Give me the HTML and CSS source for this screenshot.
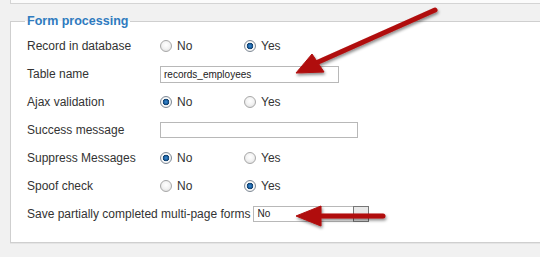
FILE: index.html
```html
<!DOCTYPE html>
<html lang="en">
<head>
    <meta charset="UTF-8">
    <title>Form processing</title>
    <link rel="stylesheet" href="styles.css">
</head>
<body>

<div class="prev-panel"></div>

<fieldset class="panel">
    <legend>Form processing</legend>

    <div class="row">
        <label class="lbl">Record in database</label>
        <div class="choices">
            <span class="choice"><span class="radio"></span>No</span>
            <span class="choice"><span class="radio checked"></span>Yes</span>
        </div>
    </div>

    <div class="row">
        <label class="lbl" for="table">Table name</label>
        <div><input type="text" id="table" class="field" value="records_employees"></div>
    </div>

    <div class="row">
        <label class="lbl">Ajax validation</label>
        <div class="choices">
            <span class="choice"><span class="radio checked"></span>No</span>
            <span class="choice"><span class="radio"></span>Yes</span>
        </div>
    </div>

    <div class="row">
        <label class="lbl" for="success">Success message</label>
        <div><input type="text" id="success" class="field field-long" value=""></div>
    </div>

    <div class="row">
        <label class="lbl">Suppress Messages</label>
        <div class="choices">
            <span class="choice"><span class="radio checked"></span>No</span>
            <span class="choice"><span class="radio"></span>Yes</span>
        </div>
    </div>

    <div class="row">
        <label class="lbl">Spoof check</label>
        <div class="choices">
            <span class="choice"><span class="radio"></span>No</span>
            <span class="choice"><span class="radio checked"></span>Yes</span>
        </div>
    </div>

    <div class="row row-wide">
        <label class="lbl">Save partially completed multi-page forms</label>
        <div class="select">
            <span class="select-value">No</span>
            <span class="select-btn"></span>
        </div>
    </div>
</fieldset>

<!-- annotation arrows -->
<svg class="arrows" width="540" height="257" viewBox="0 0 540 257">
    <defs>
        <filter id="shadow" x="-20%" y="-20%" width="140%" height="140%">
            <feDropShadow dx="1" dy="2" stdDeviation="1.5" flood-color="#000" flood-opacity="0.45"/>
        </filter>
    </defs>
    <g filter="url(#shadow)" fill="#b00b0b" stroke="#b00b0b">
        <line x1="435" y1="10" x2="316" y2="63" stroke-width="5" stroke-linecap="round"/>
        <polygon points="296,73 312,54 324,72" stroke-width="1" stroke-linejoin="round"/>
        <line x1="383" y1="216" x2="318" y2="216" stroke-width="5" stroke-linecap="round"/>
        <polygon points="296,216 321,206 321,226" stroke-width="1" stroke-linejoin="round"/>
    </g>
</svg>

</body>
</html>
```
FILE: styles.css
```css
body {
    margin: 0;
    height: 257px;
    overflow: hidden;
    position: relative;
    background-color: #f1f1f1;
    font-family: 'Liberation Sans', Arial, sans-serif;
    font-size: 12px;
    color: #333;
}

.prev-panel {
    margin-left: 10px;
    height: 3px;
    background-color: #fbfbfb;
    border-left: 1px solid #d4d4d4;
    border-bottom: 1px solid #d4d4d4;
}

.panel {
    margin: 9px -20px 0 10px;
    padding: 3px 0 14px 14px;
    background-color: #fff;
    border: 1px solid #cfcfcf;
    box-shadow: 0 1px 0 #e4e4e4;
}

.panel legend {
    padding: 0 2px;
    line-height: 16px;
    font-size: 12.5px;
    font-weight: bold;
    color: #2f7bbf;
}

.row {
    display: grid;
    grid-template-columns: 133px auto;
    align-items: center;
    height: 28px;
    padding-left: 2px;
}

.row-wide {
    display: flex;
    gap: 3px;
}

.choices {
    display: flex;
}

.choice {
    display: flex;
    align-items: center;
    gap: 5px;
    width: 84px;
}

.radio {
    width: 12px;
    height: 12px;
    box-sizing: border-box;
    border-radius: 50%;
    border: 1px solid #a8a8a8;
    background: radial-gradient(circle at 50% 40%, #fff 0, #f2f2f2 50%, #d6d6d6 100%);
}

.radio.checked {
    border-color: #7f8a96;
    background: radial-gradient(circle, #3d8fd8 0, #1b5e9e 2px, #123e68 3px, #fff 3.6px, #eee 5px);
}

.field {
    display: block;
    width: 179px;
    height: 17px;
    box-sizing: border-box;
    margin: 0;
    padding: 0 3px;
    border: 1px solid #b8b8b8;
    font-family: 'Liberation Sans', Arial, sans-serif;
    font-size: 10px;
    color: #222;
    outline: none;
}

.field-long {
    width: 198px;
    height: 16px;
}

.select {
    display: flex;
    width: 116px;
    height: 16px;
    box-sizing: border-box;
    border: 1px solid #b8b8b8;
    font-size: 10px;
    color: #222;
}

.select-value {
    flex: 1;
    padding-left: 3px;
    line-height: 14px;
}

.select-btn {
    width: 16px;
    margin: -1px -1px -1px 0;
    box-sizing: border-box;
    border: 1px solid #777;
    background-color: #e9e9e9;
}

.arrows {
    position: absolute;
    top: 0;
    left: 0;
    pointer-events: none;
}
```
